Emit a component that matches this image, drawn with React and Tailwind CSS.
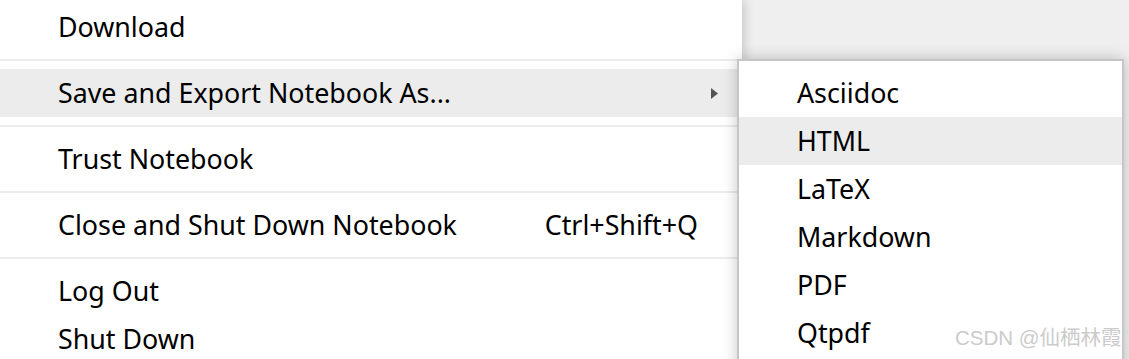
const exportFormats = ["Asciidoc", "HTML", "LaTeX", "Markdown", "PDF", "Qtpdf"];

function Separator() {
  return <div className="my-2 h-[2px] bg-[#ececec]" />;
}

function MenuItem({ label, shortcut, active, submenu }) {
  return (
    <div
      className={`flex h-12 items-center pl-[58px] pr-[44px] ${active ? "bg-[#ececec]" : ""}`}
    >
      <span className="flex-1">{label}</span>
      {shortcut && <span>{shortcut}</span>}
      {submenu && (
        <svg width="7" height="11" viewBox="0 0 7 11" className="mr-[-20px]">
          <path d="M0 0 L7 5.5 L0 11 Z" fill="#555" />
        </svg>
      )}
    </div>
  );
}

export default function App() {
  return (
    <div
      className="relative h-[359px] w-[1129px] overflow-hidden bg-[#efefef] text-[26.8px] leading-none text-black"
      style={{ fontFamily: "'Noto Sans', 'Open Sans', sans-serif" }}
    >
      <div className="h-full w-[742px] bg-white pt-[3px] shadow-[2px_0_10px_rgba(0,0,0,0.18)]">
        <MenuItem label="Download" />
        <Separator />
        <MenuItem label="Save and Export Notebook As..." active submenu />
        <Separator />
        <MenuItem label="Trust Notebook" />
        <Separator />
        <MenuItem label="Close and Shut Down Notebook" shortcut="Ctrl+Shift+Q" />
        <Separator />
        <MenuItem label="Log Out" />
        <MenuItem label="Shut Down" />
      </div>

      <div className="absolute left-[737px] top-[59px] h-[320px] w-[387px] border-2 border-[#c6c6c6] bg-white pt-[8px] shadow-[0_0_14px_rgba(0,0,0,0.22)]">
        {exportFormats.map((fmt) => (
          <div
            key={fmt}
            className={`flex h-12 items-center pl-[58px] ${fmt === "HTML" ? "bg-[#ececec]" : ""}`}
          >
            {fmt}
          </div>
        ))}
      </div>

      <div
        className="absolute left-[955px] top-[328px] text-[20.5px] leading-none text-[#cbcbcb]"
        style={{ fontFamily: "'Liberation Sans', 'Noto Sans CJK SC', sans-serif" }}
      >
        CSDN @仙栖林霞
      </div>
    </div>
  );
}
